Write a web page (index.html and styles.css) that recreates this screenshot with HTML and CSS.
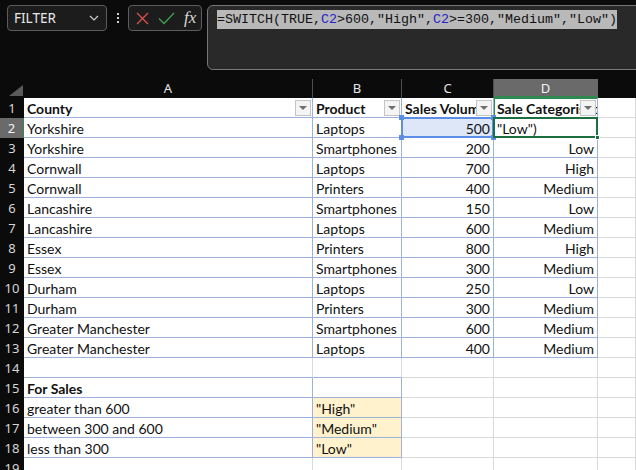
FILE: index.html
```html
<!DOCTYPE html>
<html>
<head>
<meta charset="utf-8">
<link rel="stylesheet" href="styles.css">
</head>
<body>
<div class="app">
  <div class="topbar">
    <div class="namebox">
      <span class="nb-text">FILTER</span>
      <svg class="chev" width="10" height="6" viewBox="0 0 10 6"><path d="M1 1 L5 5 L9 1" fill="none" stroke="#cfcfcf" stroke-width="1.2"/></svg>
    </div>
    <div class="dots"><i></i><i></i><i></i></div>
    <div class="btns">
      <svg width="13" height="13" viewBox="0 0 13 13"><path d="M1 1 L12 12 M12 1 L1 12" stroke="#d9534f" stroke-width="1.3" fill="none"/></svg>
      <svg width="17" height="13" viewBox="0 0 17 13"><path d="M1 6.5 L6 11.5 L16 1" stroke="#3fa05a" stroke-width="1.3" fill="none"/></svg>
      <span class="fx">fx</span>
    </div>
    <div class="formula">
      <span class="fsel">=SWITCH(TRUE,<b class="ref">C2</b>&gt;600,"High",<b class="ref">C2</b>&gt;=300,"Medium","Low")</span>
    </div>
  </div>

  <div class="sheet">
    <div class="corner"><svg width="14" height="11" viewBox="0 0 14 11"><polygon points="14,0 14,11 0,11" fill="#5a5a5a"/></svg></div>
    <div class="ch">A</div><div class="ch">B</div><div class="ch">C</div><div class="ch act">D</div><div class="ch noline"></div>

    <div class="rh">1</div>
    <div class="c t hd">County<span class="fb"></span></div>
    <div class="c t hd">Product<span class="fb"></span></div>
    <div class="c t hd">Sales Volume<span class="fb"></span></div>
    <div class="c t hd dh">Sale Categorisation<span class="fb"></span></div>
    <div class="c"></div>

    <div class="rh act">2</div>
    <div class="c t">Yorkshire</div><div class="c t">Laptops</div>
    <div class="c t r sel">500<span class="h h1"></span><span class="h h2"></span><span class="h h3"></span><span class="h h4"></span></div>
    <div class="c t edit">"Low")<span class="gh"></span></div>
    <div class="c"></div>

    <div class="rh">3</div>
    <div class="c t">Yorkshire</div><div class="c t">Smartphones</div><div class="c t r">200</div><div class="c t r">Low</div><div class="c"></div>
    <div class="rh">4</div>
    <div class="c t">Cornwall</div><div class="c t">Laptops</div><div class="c t r">700</div><div class="c t r">High</div><div class="c"></div>
    <div class="rh">5</div>
    <div class="c t">Cornwall</div><div class="c t">Printers</div><div class="c t r">400</div><div class="c t r">Medium</div><div class="c"></div>
    <div class="rh">6</div>
    <div class="c t">Lancashire</div><div class="c t">Smartphones</div><div class="c t r">150</div><div class="c t r">Low</div><div class="c"></div>
    <div class="rh">7</div>
    <div class="c t">Lancashire</div><div class="c t">Laptops</div><div class="c t r">600</div><div class="c t r">Medium</div><div class="c"></div>
    <div class="rh">8</div>
    <div class="c t">Essex</div><div class="c t">Printers</div><div class="c t r">800</div><div class="c t r">High</div><div class="c"></div>
    <div class="rh">9</div>
    <div class="c t">Essex</div><div class="c t">Smartphones</div><div class="c t r">300</div><div class="c t r">Medium</div><div class="c"></div>
    <div class="rh">10</div>
    <div class="c t">Durham</div><div class="c t">Laptops</div><div class="c t r">250</div><div class="c t r">Low</div><div class="c"></div>
    <div class="rh">11</div>
    <div class="c t">Durham</div><div class="c t">Printers</div><div class="c t r">300</div><div class="c t r">Medium</div><div class="c"></div>
    <div class="rh">12</div>
    <div class="c t">Greater Manchester</div><div class="c t">Smartphones</div><div class="c t r">600</div><div class="c t r">Medium</div><div class="c"></div>
    <div class="rh">13</div>
    <div class="c t">Greater Manchester</div><div class="c t">Laptops</div><div class="c t r">400</div><div class="c t r">Medium</div><div class="c"></div>

    <div class="rh">14</div>
    <div class="c bb"></div><div class="c bb"></div><div class="c"></div><div class="c"></div><div class="c"></div>
    <div class="rh">15</div>
    <div class="c t b">For Sales</div><div class="c t"></div><div class="c"></div><div class="c"></div><div class="c"></div>
    <div class="rh">16</div>
    <div class="c t">greater than 600</div><div class="c t y">"High"</div><div class="c"></div><div class="c"></div><div class="c"></div>
    <div class="rh">17</div>
    <div class="c t">between 300 and 600</div><div class="c t y">"Medium"</div><div class="c"></div><div class="c"></div><div class="c"></div>
    <div class="rh">18</div>
    <div class="c t">less than 300</div><div class="c t y">"Low"</div><div class="c"></div><div class="c"></div><div class="c"></div>
    <div class="rh">19</div>
    <div class="c"></div><div class="c"></div><div class="c"></div><div class="c"></div><div class="c"></div>
  </div>
</div>
</body>
</html>
```

FILE: styles.css
```css
* { box-sizing: border-box; }
html, body { margin: 0; padding: 0; }
body {
  background: #0b0b0b;
  width: 636px;
  height: 470px;
  overflow: hidden;
}
.app { width: 636px; height: 470px; overflow: hidden; }

.topbar {
  height: 79px;
  display: flex;
  align-items: flex-start;
  padding: 5px 0 0 7px;
  overflow: hidden;
}
.topbar > * { flex-shrink: 0; }
.namebox {
  width: 100px;
  height: 26px;
  border: 1px solid #5c5c5c;
  border-radius: 4px;
  background: #1c1c1c;
  display: flex;
  align-items: center;
  justify-content: space-between;
  padding: 0 7px 0 6px;
  font-family: "Noto Sans", "Open Sans", sans-serif;
  font-size: 13.5px;
  color: #e8e8e8;
}
.dots {
  width: 21px;
  height: 26px;
  display: flex;
  flex-direction: column;
  align-items: center;
  justify-content: center;
  gap: 2px;
}
.dots i { display: block; width: 2px; height: 2px; background: #d0d0d0; }
.btns {
  width: 74px;
  height: 26px;
  border: 1px solid #5c5c5c;
  border-radius: 4px;
  background: #1c1c1c;
  display: flex;
  align-items: center;
  padding: 0 0 0 7px;
}
.btns svg:first-child { margin-right: 9px; }
.btns svg:nth-child(2) { margin-right: 9px; }
.fx {
  font-family: "Liberation Serif", serif;
  font-style: italic;
  font-size: 17px;
  line-height: 20px;
  color: #d8d8d8;
}
.formula {
  margin-left: 5px;
  width: 460px;
  height: 65px;
  border: 1px solid #777;
  border-radius: 6px;
  background: #292929;
  padding: 3px 0 0 9px;
}
.fsel {
  display: inline-block;
  background: #b9b9b9;
  color: #111;
  font-family: "Liberation Mono", monospace;
  font-size: 13.33px;
  line-height: 19px;
  height: 19px;
}
.ref { font-weight: normal; color: #2323c8; }

.sheet {
  display: grid;
  grid-template-columns: 24px 289px 89px 92px 104px 1fr;
  grid-template-rows: 19px;
  grid-auto-rows: 20px;
}
.corner {
  background: #0b0b0b;
  display: flex;
  align-items: flex-end;
  justify-content: flex-end;
  padding: 0 1px 2px 0;
}
.ch {
  background: #0b0b0b;
  color: #e6e6e6;
  font-family: "Noto Sans", "Open Sans", sans-serif;
  font-size: 13px;
  line-height: 19px;
  text-align: center;
  border-right: 1px solid #4e4e4e;
}
.ch.noline { border-right: none; }
.ch.act { background: #6a6a6a; color: #f4f4f4; border-bottom: 2px solid #2f8a52; line-height: 18px; border-right-color: #6a6a6a; }
.rh {
  background: #0b0b0b;
  color: #d6d6d6;
  font-family: "Noto Sans", "Open Sans", sans-serif;
  font-size: 13px;
  line-height: 20px;
  text-align: center;
}
.rh.act { background: #6a6a6a; color: #f4f4f4; border-right: 1px solid #2f8a52; }

.c {
  background: #fff;
  border-right: 1px solid #d9d9d9;
  border-bottom: 1px solid #d9d9d9;
  font-family: "Lato", "Liberation Sans", sans-serif;
  font-size: 14px;
  line-height: 19px;
  padding: 1px 3px 0;
  color: #111;
  white-space: nowrap;
  overflow: hidden;
  position: relative;
}
.c.t { border-right-color: #9db2d8; border-bottom-color: #9db2d8; }
.c.bb { border-bottom-color: #9db2d8; }
.c.r { text-align: right; }
.c.b, .c.hd { font-weight: bold; }
.c.y { background: #fff2cc; }
.c.dh { box-shadow: inset 1px 1px 0 #2f8a52; }

.fb {
  position: absolute;
  right: 1px;
  top: 2px;
  width: 16px;
  height: 16px;
  background: #f4f4f4;
  border: 1px solid #c4c4c4;
}
.fb::after {
  content: "";
  position: absolute;
  left: 3px;
  top: 5px;
  border-left: 4px solid transparent;
  border-right: 4px solid transparent;
  border-top: 4px solid #6e6e6e;
}

.sel { background: #dde7f7; overflow: visible; z-index: 2; }
.sel::after {
  content: "";
  position: absolute;
  left: -1px; top: -1px; right: -1px; bottom: -1px;
  border: 2px solid #5b8fe6;
}
.h { position: absolute; width: 5px; height: 5px; background: #5b8fe6; z-index: 3; }
.h1 { left: -3px; top: -3px; }
.h2 { right: -3px; top: -3px; }
.h3 { left: -3px; bottom: -3px; }
.h4 { right: -3px; bottom: -3px; }

.edit { overflow: visible; z-index: 2; }
.edit::after {
  content: "";
  position: absolute;
  left: -1px; top: -1px; right: -1px; bottom: -1px;
  border: 2px solid #1f6e42;
}
.gh { position: absolute; right: -3px; bottom: -3px; width: 5px; height: 5px; background: #1f6e42; border: 1px solid #fff; z-index: 3; }
```
